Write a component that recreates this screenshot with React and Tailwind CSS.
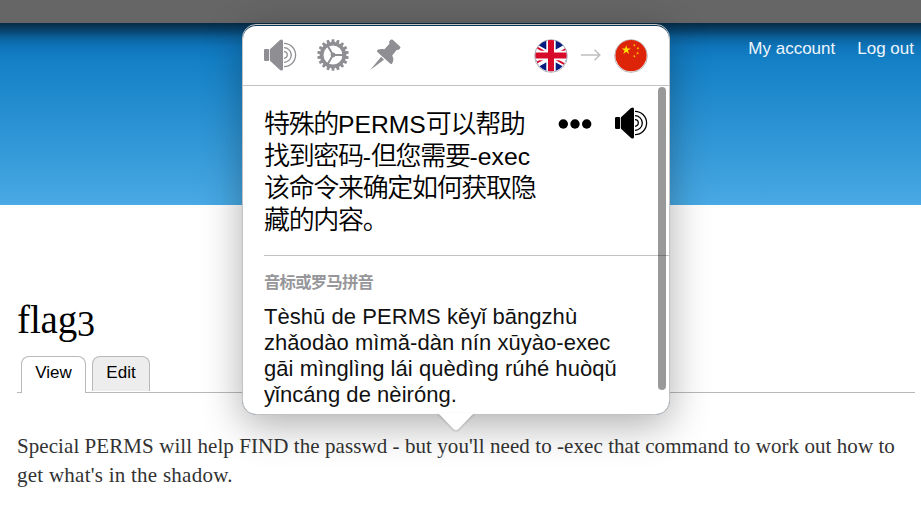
import React from "react";

function Speaker({ className }) {
  return (
    <svg viewBox="0 0 34 32" className={className} fill="currentColor">
      <rect x="1" y="10" width="5.2" height="12" rx="1.2" />
      <path d="M7 10.2 17 1.1Q20 -.8 20 2.3V29.7Q20 32.8 17 30.9L7 21.8Z" />
      <g fill="none" stroke="currentColor" strokeWidth="1.3">
        <path d="M21 12.7a3.3 3.3 0 0 1 0 6.6" />
        <path d="M21 8.7a7.3 7.3 0 0 1 0 14.6" />
        <path d="M21 4.4a11.6 11.6 0 0 1 0 23.2" />
      </g>
    </svg>
  );
}

const TEETH = Array.from({ length: 18 }, (_, i) => i * 20);

function Gear() {
  return (
    <svg viewBox="-16 -16 32 32" className="h-8 w-8 text-[#8e8e93]" fill="currentColor">
      {TEETH.map((a) => (
        <path key={a} d="M-1.8-12-1.2-15.8H1.2L1.8-12Z" transform={`rotate(${a})`} />
      ))}
      <circle r="11.3" fill="none" stroke="currentColor" strokeWidth="3.6" />
      <path d="M0 0H10.5M0 0-5.4-9.3M0 0-5.4 9.3" stroke="currentColor" strokeWidth="2" />
      <circle r="2.4" />
    </svg>
  );
}

function Pin() {
  return (
    <svg viewBox="0 0 30 30" className="h-[31px] w-[31px] text-[#8e8e93]" fill="currentColor">
      <path d="M20 .8Q21 0 22 .8L29 7.2Q30 8.3 29 9.2L27.5 10.6 26 10.5 21.5 16Q23.7 20 21.4 23.7 20.5 24.8 19.4 23.8L7.1 12.5Q6.1 11.4 7.5 10.5 10.5 9 14 10L18.8 4.6 18.5 2.3Z" />
      <path d="m10.8 17.2 2.7 2.8L.2 29.9Z" />
    </svg>
  );
}

function UkFlag() {
  return (
    <svg viewBox="0 0 34 34" className="h-[34px] w-[34px]">
      <defs>
        <clipPath id="uk">
          <circle cx="17" cy="16.6" r="15.6" />
        </clipPath>
      </defs>
      <circle cx="17" cy="17" r="16.4" fill="#fff" stroke="#b9b9bd" strokeWidth="1" />
      <g clipPath="url(#uk)">
        <rect width="34" height="34" fill="#051b7e" />
        <path d="M-6 4 40 30M-6 30 40 4" stroke="#fff" strokeWidth="6.5" />
        <path d="M-4 4.5 17 16.5M38 6.5 17 18.5M-4 27.5 17 15.5M38 29.5 17 17.5" stroke="#d80a2a" strokeWidth="2" />
        <path d="M17 0V34M0 16.5H34" stroke="#fff" strokeWidth="9.4" />
        <path d="M17 0V34M0 16.5H34" stroke="#d80a2a" strokeWidth="6" />
      </g>
    </svg>
  );
}

const STAR = "M0-1 .225-.309.951-.309.363.118.588.809 0 .382-.588.809-.363.118-.951-.309-.225-.309Z";

function ChinaFlag() {
  return (
    <svg viewBox="0 0 34 34" className="h-[34px] w-[34px]">
      <circle cx="17" cy="17" r="16.4" fill="#fff" stroke="#b9b9bd" strokeWidth="1" />
      <circle cx="17" cy="16.6" r="15.6" fill="#de2408" />
      <g fill="#ffde00">
        <path d={STAR} transform="translate(12.2 11) scale(4.8)" />
        <path d={STAR} transform="translate(20.5 6.2) rotate(20) scale(1.5)" />
        <path d={STAR} transform="translate(24 9.3) rotate(40) scale(1.5)" />
        <path d={STAR} transform="translate(23.6 14.2) scale(1.5)" />
        <path d={STAR} transform="translate(20.5 17.2) rotate(20) scale(1.5)" />
      </g>
    </svg>
  );
}

function Latin({ children }) {
  return <span className="text-[24.7px] leading-none tracking-normal">{children}</span>;
}

function Popup() {
  return (
    <div className="absolute left-[242px] top-[24px] h-[391px] w-[428px] rounded-[14px] border border-[#c2c2c4] bg-[#063657] shadow-[0_10px_40px_rgba(0,0,0,0.32)]">
      <div className="mt-px flex h-[388px] flex-col rounded-[13px] bg-white">
        <div className="flex h-[60px] shrink-0 items-center border-b border-[#c2c2c4] pb-[2px] pl-5 pr-[21px]">
          <Speaker className="h-8 w-[34px] text-[#8e8e93]" />
          <div className="ml-5">
            <Gear />
          </div>
          <div className="ml-[21px]">
            <Pin />
          </div>
          <div className="ml-auto flex items-center pt-[2px]">
            <UkFlag />
            <svg viewBox="0 0 20 12" className="mx-[13px] mb-[2px] h-3 w-5" fill="none" stroke="#bfbfbf" strokeWidth="1.5">
              <path d="M0 6H18.5M13.5.8 18.8 6 13.5 11.2" />
            </svg>
            <ChinaFlag />
          </div>
        </div>
        <div className="relative flex-1 overflow-hidden pl-[21px]">
          <div className="flex h-[170px] border-b border-[#c2c2c4] pt-[20px]">
            <div className="mt-[2px] w-[294px] whitespace-nowrap font-['Liberation_Sans','Noto_Sans_CJK_SC',sans-serif] text-[26px] font-[350] leading-8 tracking-[-1.33px] text-black">
              <div className="h-8">特殊的<Latin>PERMS</Latin>可以帮助</div>
              <div className="h-8">找到密码<Latin>-</Latin>但您需要<Latin>-exec</Latin></div>
              <div className="h-8">该命令来确定如何获取隐</div>
              <div className="h-8">藏的内容。</div>
            </div>
            <svg viewBox="0 0 34 10" className="mt-[13px] h-[10px] w-[34px]">
              <circle cx="5.3" cy="5" r="4.7" />
              <circle cx="17" cy="5" r="4.7" />
              <circle cx="28.7" cy="5" r="4.7" />
            </svg>
            <Speaker className="ml-[22px] mt-px h-8 w-[34px] text-black" />
          </div>
          <div className="mt-[13px] font-['Noto_Sans_CJK_SC',sans-serif] text-[16.4px] font-bold leading-6 tracking-[-0.8px] text-[#97979b]">
            音标或罗马拼音
          </div>
          <div className="mt-[11px] whitespace-nowrap font-['Liberation_Sans',sans-serif] text-[22px] leading-[26px] tracking-[0.05px] text-[#111]">
            <div>Tèshū de PERMS kěyǐ bāngzhù</div>
            <div>zhǎodào mìmǎ-dàn nín xūyào-exec</div>
            <div>gāi mìnglìng lái quèdìng rúhé huòqǔ</div>
            <div>yǐncáng de nèiróng.</div>
          </div>
          <div className="absolute right-[3px] top-px h-[303px] w-2 rounded-full bg-black/40" />
        </div>
      </div>
      <svg viewBox="0 0 38 18" className="absolute left-[194px] top-[388px] h-[18px] w-[38px] overflow-visible drop-shadow-[0_1px_1px_rgba(0,0,0,0.2)]">
        <path d="M0 0Q1.5 .3 3 2L16.2 15.8Q19 18.6 21.8 15.8L35 2Q36.5 .3 38 0Z" fill="#fff" />
      </svg>
    </div>
  );
}

export default function App() {
  return (
    <div className="relative h-[512px] w-[921px] overflow-hidden bg-white">
      <div className="h-[23px] bg-[#666]" />
      <div className="flex h-[182px] justify-end gap-[22px] bg-[linear-gradient(to_bottom,#062b44_0px,#08416b_7px,#0b629d_15px,#0f75bb_24px,#1480c6_38px,#48a9e4_182px)] pr-[7px] pt-[14px] font-['Liberation_Sans',sans-serif] text-[17px] leading-6 text-[#eef5fa]">
        <span>My account</span>
        <span>Log out</span>
      </div>
      <div className="pl-[17px] pr-[6px] pt-[92px]">
        <h1 className="flex h-[45px] whitespace-nowrap font-['Liberation_Serif',serif] text-[39px] leading-[45px] text-black">
          <span className="w-[60px] tracking-[-0.1px]">flag</span>
          <span className="mt-[5px] text-[36px]">3</span>
        </h1>
        <div className="mt-[14px] flex h-[37px] items-start gap-[6px] border-b border-[#b8b8b8] pl-1 font-['Liberation_Sans',sans-serif] text-[17px] leading-8 text-black">
          <div className="h-[37px] w-[65px] rounded-t-[8px] border border-b-0 border-[#b8b8b8] bg-white text-center">View</div>
          <div className="h-[35px] w-[58px] rounded-t-[8px] border border-b-0 border-[#b8b8b8] bg-[#ededed] text-center">Edit</div>
        </div>
        <div className="mt-[39px] whitespace-nowrap font-['Liberation_Serif',serif] text-[21px] leading-[29px] tracking-[0.07px] text-[#333]">
          <div>Special PERMS will help FIND the passwd - but you'll need to -exec that command to work out how to</div>
          <div className="tracking-[0.25px]">get what's in the shadow.</div>
        </div>
      </div>
      <Popup />
    </div>
  );
}
